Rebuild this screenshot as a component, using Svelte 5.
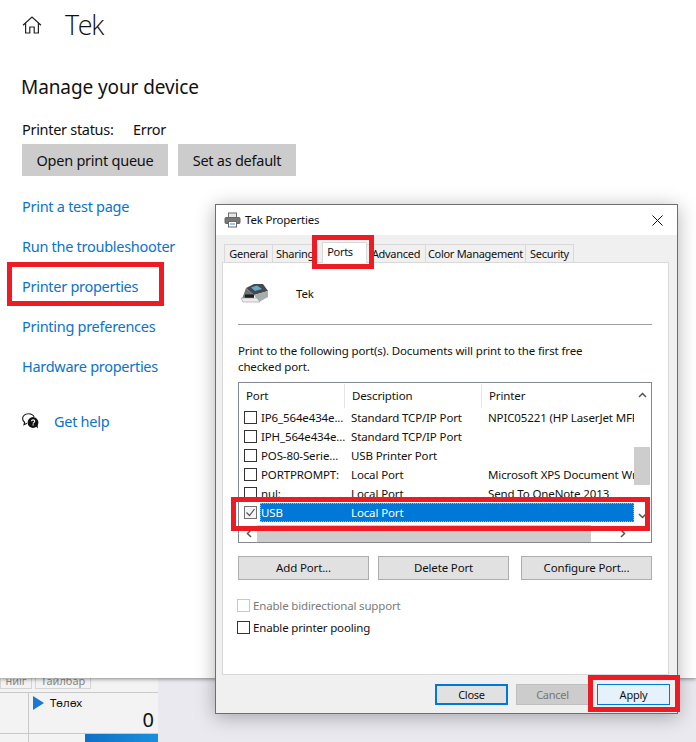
<script>
	const links = ['Print a test page', 'Run the troubleshooter', 'Printer properties', 'Printing preferences', 'Hardware properties']
	const tabs = [
		{ label: 'General', width: 49 },
		{ label: 'Sharing', width: 46 },
		{ label: 'Ports', width: 45, active: true },
		{ label: 'Advanced', width: 60 },
		{ label: 'Color Management', width: 101 },
		{ label: 'Security', width: 49 }
	]
	const ports = [
		['IP6_564e434e...', 'Standard TCP/IP Port', 'NPIC05221 (HP LaserJet MFP M'],
		['IPH_564e434e...', 'Standard TCP/IP Port', ''],
		['POS-80-Serie...', 'USB Printer Port', ''],
		['PORTPROMPT:', 'Local Port', 'Microsoft XPS Document Writer'],
		['nul:', 'Local Port', 'Send To OneNote 2013'],
		['USB', 'Local Port', '', true],
		['', '', '']
	]
</script>

<div class="desktop">
	<main class="settings">
		<header class="title">
			<svg class="home" width="20" height="18" viewBox="0 0 20 18" fill="none" stroke="#222" stroke-width="1.2">
				<path d="M1 9.2 10 1l9 8.2M3.6 7v10h4.2v-6h4.400v6h4.200V7" />
			</svg>
			<h1>Tek</h1>
		</header>
		<h2>Manage your device</h2>
		<p class="status"><span>Printer status:</span><span>Error</span></p>
		<div class="actions">
			<button class="wide">Open print queue</button>
			<button>Set as default</button>
		</div>
		<nav>
			{#each links as link}
				<a href="#top">{link}</a>
			{/each}
		</nav>
		<div class="help">
			<svg width="17" height="16" viewBox="0 0 17 16">
				<path d="M6.500.7C3.200.7.600 2.800.600 5.500c0 1.500.8 2.800 2 3.700L2 11.800l3-1.500" fill="#fff" stroke="#111" stroke-width="1.100" />
				<path d="M6.500.7c2.600 0 4.800 1.300 5.600 3.200" fill="none" stroke="#111" stroke-width="1.100" />
				<circle cx="11" cy="9.500" r="5.400" fill="#111" />
				<path d="M13.500 13l2.500 2.500-.5-4z" fill="#111" />
				<path d="M9.400 8.200c.2-1.800 3.300-1.800 3.300 0 0 1.200-1.500 1.100-1.600 2.400" fill="none" stroke="#fff" stroke-width="1.100" />
				<rect x="10.500" y="11.300" width="1.200" height="1.200" fill="#fff" />
			</svg>
			<a href="#top">Get help</a>
		</div>
	</main>

	<div class="backdrop">
		<div class="app">
			<div class="app-tabs"><span class="t1">ниіг</span><span class="t2">Тайлбар</span></div>
			<div class="cell-row">
				<div class="cell-side"></div>
				<div class="cell">
					<div class="cell-label"><i></i>Төлөх</div>
					<div class="cell-value">0</div>
				</div>
			</div>
			<div class="cell-row last">
				<div class="cell-side"></div>
				<div class="cell-gap"></div>
				<div class="cell-bar"></div>
			</div>
		</div>
	</div>

	<section class="dialog">
		<div class="caption">
			<svg width="17" height="16" viewBox="0 0 17 16">
				<rect x="4.500" y="1" width="8" height="5" fill="#e8e8e8" stroke="#6a6a6a" />
				<rect x="1" y="5.500" width="15" height="6" rx="1" fill="#777" stroke="#666" />
				<rect x="4.500" y="9.500" width="8" height="5.500" fill="#fff" stroke="#6a6a6a" />
				<rect x="6" y="11.500" width="5" height="1" fill="#4a90d0" />
			</svg>
			<span>Tek Properties</span>
			<svg class="close" width="11" height="11" viewBox="0 0 11 11" stroke="#111" stroke-width="1">
				<path d="M.5.5l10 10M10.500.5l-10 10" />
			</svg>
		</div>
		<div class="tabs">
			{#each tabs as tab}
				<div class="tab" class:active={tab.active} style:width="{tab.width}px">{tab.label}</div>
			{/each}
		</div>
		<div class="panel">
			<div class="printer">
				<svg width="30" height="19" viewBox="0 0 30 19">
					<path d="M7 4 15 0h9l5 7-14 4z" fill="#44494d" />
					<path d="M12 3.500 18 1.500l5 3.500-7 2z" fill="#6aa8c8" />
					<path d="M7 4l8 7v4H3z" fill="#6d7276" />
					<path d="M15 11l14-4v6l-9 5z" fill="#a9acae" />
					<path d="M6 10.500h9V14H6z" fill="#1d1d1d" />
					<path d="M2 14h16l3 4H4z" fill="#ececec" stroke="#9a9a9a" stroke-width=".6" />
				</svg>
				<span>Tek</span>
			</div>
			<hr />
			<p class="hint">Print to the following port(s). Documents will print to the first free<br />checked port.</p>
			<div class="list">
				<div class="list-main">
					<div class="list-view">
						<div class="head">
							<div class="c1">Port</div>
							<div class="c2">Description</div>
							<div class="c3">Printer</div>
						</div>
						{#each ports as [port, desc, printer, selected]}
							<div class="row">
								<span class="check" class:checked={selected}>
									{#if selected}
										<svg width="13" height="13" viewBox="0 0 13 13" fill="none" stroke="#555" stroke-width="1.200"><path d="M2.500 6.500 5.500 9.500 10.500 3" /></svg>
									{/if}
								</span>
								<div class="cells" class:selected>
									<span class="r1">{port}</span>
									<span class="r2">{desc}</span>
									<span class="r3">{printer}</span>
								</div>
							</div>
						{/each}
					</div>
					<div class="vscroll">
						<svg width="9" height="6" viewBox="0 0 9 6" fill="none" stroke="#555" stroke-width="1.500"><path d="M1 5l3.500-3.500L8 5" /></svg>
						<div class="vtrack"><div class="vthumb"></div></div>
						<svg width="9" height="6" viewBox="0 0 9 6" fill="none" stroke="#555" stroke-width="1.500"><path d="M1 1l3.500 3.500L8 1" /></svg>
					</div>
				</div>
				<div class="hscroll">
					<svg width="6" height="9" viewBox="0 0 6 9" fill="none" stroke="#555" stroke-width="1.500"><path d="M5 1 1.500 4.500 5 8" /></svg>
					<div class="htrack"><div class="hthumb"></div></div>
					<svg width="6" height="9" viewBox="0 0 6 9" fill="none" stroke="#555" stroke-width="1.500"><path d="M1 1l3.500 3.500L1 8" /></svg>
				</div>
			</div>
			<div class="port-buttons">
				<button>Add Port...</button>
				<button>Delete Port</button>
				<button class="configure">Configure Port...</button>
			</div>
			<label class="opt disabled"><span class="check"></span>Enable bidirectional support</label>
			<label class="opt"><span class="check"></span>Enable printer pooling</label>
		</div>
		<div class="footer">
			<button class="primary">Close</button>
			<button class="off">Cancel</button>
			<button class="hover">Apply</button>
		</div>
	</section>

	<div class="mark m-props"></div>
	<div class="mark m-ports"></div>
	<div class="mark m-usb"></div>
	<div class="mark m-apply"></div>
</div>

<style>
	:global(body) {
		margin: 0;
	}
	.desktop {
		position: relative;
		width: 696px;
		height: 742px;
		overflow: hidden;
		display: flex;
		flex-direction: column;
		background: #e9e9ef;
		font-family: 'Noto Sans', 'Open Sans', sans-serif;
		color: #111;
	}
	button {
		font: inherit;
		color: #111;
		padding: 0;
		border: none;
	}

	/* settings page */
	.settings {
		height: 678px;
		flex: none;
		box-sizing: border-box;
		background: #fff;
		padding: 8px 0 0 22px;
		box-shadow: 0 1px 4px rgba(0, 0, 0, 0.45);
		position: relative;
		z-index: 1;
	}
	.title {
		display: flex;
		align-items: center;
		gap: 23px;
		height: 34px;
	}
	h1 {
		margin: 0 0 1px;
		font-size: 27px;
		font-weight: 300;
		line-height: 34px;
		letter-spacing: -1.4px;
		font-family: 'Open Sans', sans-serif;
	}
	h2 {
		margin: 27px 0 0 -1px;
		font-size: 19px;
		font-weight: 400;
		line-height: 36px;
		letter-spacing: -0.1px;
	}
	.status {
		display: flex;
		margin: 14px 0 0;
		font-size: 14.500px;
		line-height: 20px;
		letter-spacing: -0.3px;
	}
	.status span:first-child {
		width: 111px;
	}
	.actions {
		display: flex;
		gap: 10px;
		margin-top: 5px;
	}
	.actions button {
		width: 118px;
		height: 32px;
		background: #ccc;
		font-size: 14.500px;
		letter-spacing: -0.25px;
		padding-bottom: 1px;
	}
	.actions .wide {
		width: 146px;
	}
	nav {
		display: flex;
		flex-direction: column;
		gap: 20px;
		margin-top: 20px;
	}
	a {
		color: #0a73cc;
		text-decoration: none;
		font-size: 14.500px;
		line-height: 20px;
		letter-spacing: -0.28px;
	}
	.help {
		display: flex;
		align-items: center;
		gap: 15px;
		margin-top: 35px;
	}

	/* app peeking from behind */
	.backdrop {
		flex: 1;
		min-height: 0;
	}
	.app {
		width: 158px;
		height: 100%;
		background: #f3f3f3;
		display: flex;
		flex-direction: column;
	}
	.app-tabs {
		display: flex;
		flex: none;
		gap: 3px;
		height: 11px;
		box-sizing: border-box;
		margin-bottom: 3px;
		font-size: 11px;
		line-height: 6px;
		color: #888;
		text-align: center;
	}
	.t1,
	.t2 {
		overflow: hidden;
		border: 1px solid #d4d4d4;
		border-top: none;
		box-sizing: border-box;
	}
	.t1 {
		width: 32px;
	}
	.t2 {
		width: 56px;
	}
	.cell-row {
		display: flex;
		height: 41px;
		box-sizing: border-box;
		border-top: 1px solid #c9c9c9;
		flex: none;
	}
	.cell-side {
		width: 29px;
		flex: none;
		box-sizing: border-box;
		border-right: 1px solid #c9c9c9;
	}
	.cell {
		flex: 1;
		padding: 3px 4px 0 4px;
	}
	.cell-label {
		display: flex;
		align-items: center;
		gap: 6px;
		font-size: 11.500px;
		line-height: 14px;
		color: #111;
	}
	.cell-label i {
		width: 0;
		height: 0;
		border-left: 11px solid #1a78d2;
		border-top: 7px solid transparent;
		border-bottom: 7px solid transparent;
	}
	.cell-value {
		text-align: right;
		font-size: 20px;
		line-height: 20px;
	}
	.cell-row.last {
		height: 9px;
	}
	.cell-gap {
		width: 56px;
		flex: none;
	}
	.cell-bar {
		flex: 1;
		background: linear-gradient(90deg, #0f6fc6, #1b8fdc);
	}

	/* properties dialog */
	.dialog {
		position: absolute;
		left: 215px;
		top: 204px;
		width: 463px;
		height: 510px;
		box-sizing: border-box;
		border: 1px solid #6e6e6e;
		background: #f0f0f0;
		box-shadow: 0 3px 18px rgba(0, 0, 0, 0.3);
		z-index: 2;
		display: flex;
		flex-direction: column;
		font-size: 11.500px;
		letter-spacing: -0.13px;
	}
	.caption {
		height: 29px;
		flex: none;
		background: #fff;
		display: flex;
		align-items: center;
		gap: 4px;
		padding: 0 14px 1px 8px;
		font-size: 11.500px;
		letter-spacing: -0.2px;
	}
	.close {
		margin-left: auto;
		margin-top: 1px;
	}
	.tabs {
		display: flex;
		align-items: flex-end;
		height: 27px;
		flex: none;
		padding-left: 8px;
		position: relative;
		z-index: 1;
		font-size: 11px;
		letter-spacing: -0.3px;
	}
	.tab {
		height: 18px;
		box-sizing: border-box;
		border: 1px solid #d9d9d9;
		border-bottom: none;
		margin-right: -1px;
		background: #f0f0f0;
		text-align: center;
		line-height: 17px;
		white-space: nowrap;
		overflow: hidden;
	}
	.tab.active {
		height: 21px;
		background: #fff;
		line-height: 17px;
		margin-bottom: -1px;
		padding-right: 9px;
		position: relative;
	}
	.tab:nth-child(3) {
		margin-left: 5px;
	}
	.panel {
		margin: 0 8px 0 6px;
		height: 413px;
		flex: none;
		box-sizing: border-box;
		background: #fff;
		border: 1px solid #d9d9d9;
		padding: 0 16px 0 15px;
	}
	.printer {
		display: flex;
		align-items: center;
		gap: 27px;
		height: 19px;
		margin: 21px 0 0 1px;
	}
	hr {
		margin: 21px 0 0;
		border: none;
		border-top: 1px solid #a0a0a0;
	}
	.hint {
		margin: 18px 0 0;
		line-height: 16px;
	}
	.list {
		margin-top: 7px;
		height: 161px;
		box-sizing: border-box;
		border: 1px solid #828790;
		display: flex;
		flex-direction: column;
	}
	.list-main {
		display: flex;
		flex: 1;
		min-height: 0;
	}
	.list-view {
		width: 395px;
		overflow: hidden;
		flex: none;
	}
	.head {
		display: flex;
		height: 24px;
		line-height: 24px;
		margin-top: 1px;
	}
	.head div {
		box-sizing: border-box;
		padding-left: 7px;
		border-right: 1px solid #e5e5e5;
		white-space: nowrap;
	}
	.c1 {
		width: 106px;
	}
	.c2 {
		width: 137px;
	}
	.c3 {
		flex: 1;
		border-right: none !important;
	}
	.row {
		display: flex;
		align-items: center;
		height: 19px;
		padding-left: 5px;
		white-space: nowrap;
	}
	.check {
		width: 13px;
		height: 13px;
		box-sizing: border-box;
		border: 1px solid #333;
		background: #fff;
		flex: none;
		display: block;
	}
	.check.checked {
		border-color: #707070;
		background: #f4f4f4;
	}
	.check svg {
		display: block;
		margin: -1px;
	}
	.cells {
		display: flex;
		flex: 1;
		height: 19px;
		line-height: 19px;
		margin-left: 3px;
		box-sizing: border-box;
		overflow: hidden;
	}
	.cells.selected {
		background: #0078d7;
		color: #fff;
		outline: 1px dotted #f3a33a;
		outline-offset: -1px;
	}
	.r1 {
		width: 91px;
		padding-left: 1px;
		flex: none;
		box-sizing: border-box;
	}
	.r2 {
		width: 137px;
		flex: none;
	}
	.vscroll {
		width: 17px;
		flex: none;
		display: flex;
		flex-direction: column;
		align-items: center;
		padding: 9px 0 6px;
		box-sizing: border-box;
		background: #fff;
	}
	.vtrack {
		flex: 1;
		width: 100%;
		padding-top: 49px;
		box-sizing: border-box;
	}
	.vthumb {
		height: 38px;
		margin: 0 1px 0 0;
		background: #cdcdcd;
	}
	.hscroll {
		height: 17px;
		flex: none;
		display: flex;
		align-items: center;
		padding: 0 25px 0 7px;
		background: #fff;
	}
	.htrack {
		flex: 1;
		height: 100%;
		padding: 0 29px 0 5px;
		box-sizing: border-box;
	}
	.hthumb {
		height: 100%;
		background: #cdcdcd;
	}
	.port-buttons {
		display: flex;
		gap: 9px;
		margin-top: 13px;
	}
	.port-buttons button {
		width: 131px;
		height: 24px;
		background: #e1e1e1;
		border: 1px solid #adadad;
		box-sizing: border-box;
		font-size: 11.500px;
		letter-spacing: -0.15px;
		padding-bottom: 1px;
	}
	.port-buttons .configure {
		margin-left: 3px;
	}
	.opt {
		display: flex;
		align-items: center;
		gap: 3px;
		line-height: 19px;
		margin-left: -1px;
		letter-spacing: -0.17px;
	}
	.port-buttons + .opt {
		margin-top: 16px;
	}
	.opt + .opt {
		margin-top: 3px;
	}
	.opt.disabled {
		color: #7a7a7a;
	}
	.opt.disabled .check {
		border-color: #c8c8c8;
	}
	.footer {
		flex: 1;
		display: flex;
		align-items: center;
		padding: 1px 6px 0 219px;
		gap: 8px;
	}
	.footer button {
		width: 73px;
		height: 21px;
		box-sizing: border-box;
		font-size: 11px;
		letter-spacing: -0.25px;
		background: #e1e1e1;
	}
	.primary {
		border: 2px solid #0078d7 !important;
	}
	.footer .off {
		background: #ccc;
		border: 1px solid #bfbfbf;
		color: #777;
	}
	.footer .hover {
		background: #e5f1fb;
		border: 1px solid #0078d7;
	}

	/* red annotations on top of the screenshot */
	.mark {
		position: absolute;
		z-index: 3;
		box-sizing: border-box;
		border: 5px solid #ed1c24;
	}
	.m-props {
		left: 7px;
		top: 262px;
		width: 157px;
		height: 44px;
	}
	.m-ports {
		left: 312px;
		top: 235px;
		width: 62px;
		height: 34px;
	}
	.m-usb {
		left: 231px;
		top: 497px;
		width: 419px;
		height: 34px;
	}
	.m-apply {
		left: 588px;
		top: 675px;
		width: 92px;
		height: 37px;
	}
</style>
